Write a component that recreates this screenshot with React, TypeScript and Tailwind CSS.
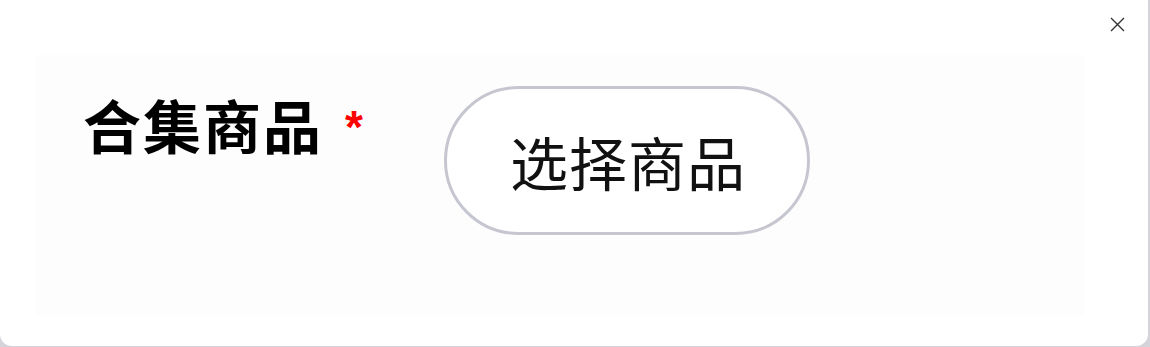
const cjk = { fontFamily: '"Noto Sans CJK SC", "Noto Sans", sans-serif' };

export default function App() {
  return (
    <div className="w-[1150px] h-[347px] bg-[#d4d4da] overflow-hidden">
      <div className="relative w-[1148px] h-[346px] bg-white rounded-b-[12px]">
        <button className="absolute top-[16px] right-[22px] text-[#333]" aria-label="close">
          <svg width="17" height="17" viewBox="0 0 17 17" fill="none" stroke="currentColor" strokeWidth="1.4">
            <path d="M2 2 L15 15 M15 2 L2 15" />
          </svg>
        </button>
        <div className="pt-[55px] px-[35px]">
          <div className="h-[260px] w-[1050px] bg-[#fdfdfe] flex items-start pt-[31px] pl-[48px]" style={cjk}>
            <div className="flex items-start mt-[9px]">
              <span className="text-[58px] leading-none font-semibold text-black tracking-[2px]">合集商品</span>
              <span className="ml-[22px] mt-[9px] text-[46px] leading-none font-bold text-[#ff0000]" style={{ fontFamily: '"Liberation Sans", sans-serif' }}>*</span>
            </div>
            <button className="ml-[81px] w-[366px] h-[149px] rounded-full border-[3px] border-[#c6c6d0] bg-white flex items-center justify-center">
              <span className="text-[58px] leading-none text-[#111] tracking-[1px] pl-[2px]">选择商品</span>
            </button>
          </div>
        </div>
      </div>
    </div>
  );
}
